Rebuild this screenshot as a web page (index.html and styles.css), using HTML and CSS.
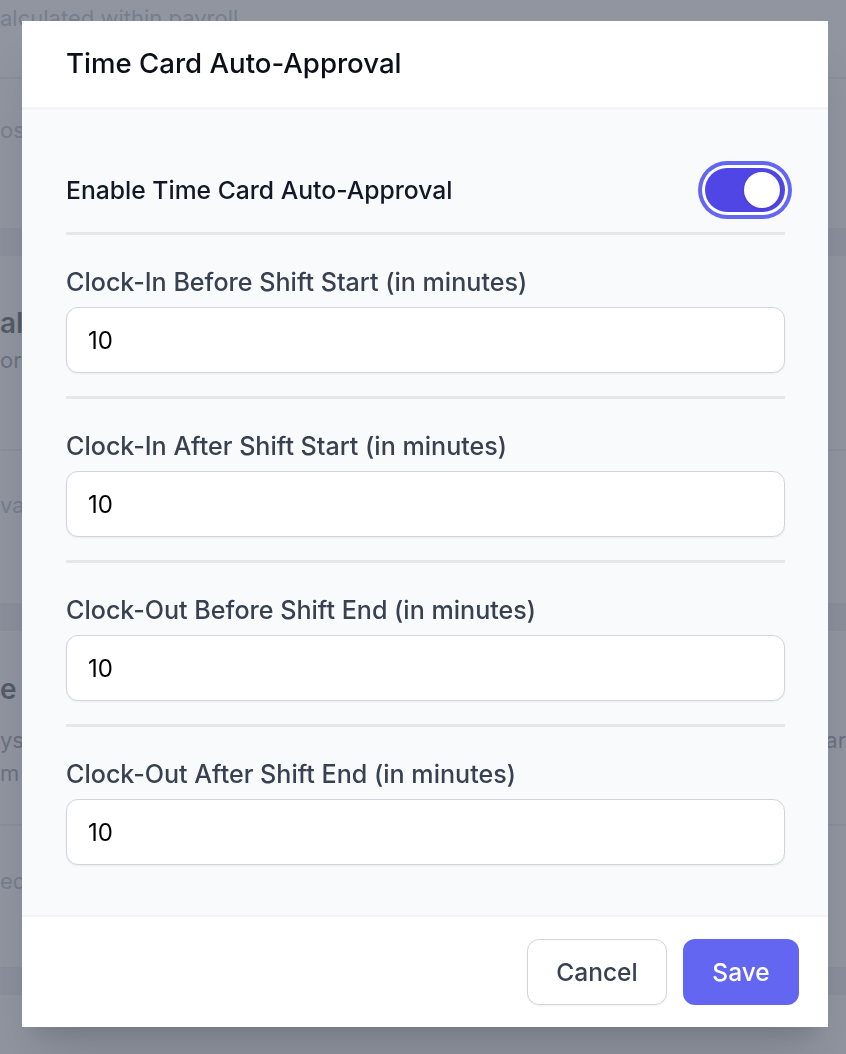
FILE: index.html
```html
<!DOCTYPE html>
<html lang="en">
<head>
<meta charset="utf-8">
<title>Time Card Auto-Approval</title>
<link rel="stylesheet" href="styles.css">
</head>
<body>
<div class="page">
  <div class="bg-row bg-row-first"><p class="bg-muted">alculated within payroll</p></div>
  <div class="bg-row bg-row-second"><p class="bg-muted">os</p></div>
  <div class="bg-band"></div>
  <section class="bg-card bg-card-one">
    <div class="bg-card-head">
      <h2 class="bg-title">al</h2>
      <p class="bg-muted">or</p>
    </div>
    <div class="bg-card-item"><p class="bg-muted">va</p></div>
  </section>
  <div class="bg-band"></div>
  <section class="bg-card bg-card-two">
    <div class="bg-card-head">
      <h2 class="bg-title">e</h2>
      <p class="bg-muted bg-wide">ys<span class="bg-end">ar</span></p>
      <p class="bg-muted">m</p>
    </div>
    <div class="bg-card-item"><p class="bg-muted">ed</p></div>
  </section>
  <div class="bg-band"></div>
  <section class="bg-card bg-card-three"></section>
</div>

<div class="overlay"></div>

<div class="modal">
  <div class="modal-header">
    <h1 class="modal-title">Time Card Auto-Approval</h1>
  </div>
  <div class="modal-body">
    <div class="toggle-row">
      <span class="toggle-label">Enable Time Card Auto-Approval</span>
      <button class="toggle" type="button" aria-pressed="true"><span class="toggle-knob"></span></button>
    </div>
    <div class="field">
      <label class="field-label">Clock-In Before Shift Start (in minutes)</label>
      <div class="field-input">10</div>
    </div>
    <div class="field">
      <label class="field-label">Clock-In After Shift Start (in minutes)</label>
      <div class="field-input">10</div>
    </div>
    <div class="field">
      <label class="field-label">Clock-Out Before Shift End (in minutes)</label>
      <div class="field-input">10</div>
    </div>
    <div class="field field-last">
      <label class="field-label">Clock-Out After Shift End (in minutes)</label>
      <div class="field-input">10</div>
    </div>
  </div>
  <div class="modal-footer">
    <button class="btn btn-cancel" type="button">Cancel</button>
    <button class="btn btn-save" type="button">Save</button>
  </div>
</div>
</body>
</html>
```

FILE: styles.css
```css
* { box-sizing: border-box; }

html, body {
  margin: 0;
  padding: 0;
  height: 100%;
  overflow: hidden;
}

body {
  font-family: Inter, "Noto Sans", sans-serif;
  background: #ffffff;
  color: #111827;
}

p, h1, h2 { margin: 0; }

/* ---------- background page ---------- */
.page {
  width: 846px;
}

.bg-muted {
  font-size: 22px;
  line-height: 28px;
  color: #9ca3af;
  white-space: nowrap;
}

.bg-row {
  border-bottom: 2px solid #e5e7eb;
}

.bg-row-first {
  height: 79px;
  padding-top: 4px;
}

.bg-row-second {
  height: 149px;
  padding-top: 37px;
  border-bottom: none;
}

.bg-band {
  height: 28px;
  background: #e5e7eb;
}

.bg-card {
  background: #ffffff;
}

.bg-card-head {
  display: flex;
  flex-direction: column;
}

.bg-title {
  font-size: 28px;
  line-height: 36px;
  font-weight: 600;
  color: #111827;
}

.bg-card-one { height: 347px; }
.bg-card-one .bg-card-head {
  height: 195px;
  padding-top: 49px;
  gap: 5px;
  border-bottom: 2px solid #e5e7eb;
}
.bg-card-one .bg-card-item { padding-top: 40px; }

.bg-card-two { height: 336px; }
.bg-card-two .bg-card-head {
  height: 195px;
  padding-top: 40px;
  border-bottom: 2px solid #e5e7eb;
}
.bg-card-two .bg-card-head .bg-title { margin-bottom: 17px; }
.bg-card-two .bg-card-head .bg-muted { line-height: 33px; }
.bg-card-two .bg-card-item { padding-top: 41px; }

.bg-wide {
  display: flex;
  justify-content: space-between;
}
.bg-card-two .bg-card-head .bg-muted { color: #6b7280; }
.bg-card-one .bg-card-head .bg-muted { color: #6b7280; }

.bg-card-three { height: 80px; }

/* ---------- overlay ---------- */
.overlay {
  position: fixed;
  inset: 0;
  background: rgba(107, 114, 128, 0.75);
}

/* ---------- modal ---------- */
.modal {
  position: absolute;
  top: 21px;
  left: 22px;
  width: 806px;
  background: #ffffff;
  box-shadow: 0 40px 50px -10px rgba(0, 0, 0, 0.12), 0 16px 20px -12px rgba(0, 0, 0, 0.12);
  display: flex;
  flex-direction: column;
}

.modal-header {
  height: 89px;
  padding: 0 44px;
  display: flex;
  align-items: center;
  padding-bottom: 3px;
  border-bottom: 3px solid #f3f4f6;
}

.modal-title {
  font-size: 27.6px;
  line-height: 32px;
  font-weight: 500;
  color: #0b0f19;
}

.modal-body {
  background: #f9fafb;
  padding: 0 43px 27px 44px;
}

.toggle-row {
  display: flex;
  align-items: center;
  justify-content: space-between;
  padding: 58px 0 20px;
  border-bottom: 3px solid #e5e7eb;
}

.toggle-label {
  font-size: 24.7px;
  line-height: 28px;
  font-weight: 500;
  color: #111827;
}

.toggle {
  position: relative;
  width: 80px;
  height: 44px;
  border: none;
  padding: 0;
  margin-right: 0;
  border-radius: 22px;
  background: #4f46e5;
  box-shadow: 0 0 0 3px #ffffff, 0 0 0 7px #6366f1;
}

.toggle-knob {
  position: absolute;
  top: 4px;
  right: 5px;
  width: 36px;
  height: 36px;
  border-radius: 50%;
  background: #ffffff;
  box-shadow: 0 1px 3px rgba(0, 0, 0, 0.15);
}

.field {
  padding: 33px 0 23px;
  border-bottom: 3px solid #e5e7eb;
  display: flex;
  flex-direction: column;
}

.field-last {
  border-bottom: none;
}

.field-label {
  font-size: 25.1px;
  line-height: 28px;
  font-weight: 500;
  color: #374151;
  margin-bottom: 11px;
}

.field-input {
  height: 66px;
  background: #ffffff;
  border: 1px solid #d1d5db;
  border-radius: 12px;
  box-shadow: 0 1px 2px rgba(0, 0, 0, 0.06);
  padding: 0 21px;
  display: flex;
  align-items: center;
  font-size: 24px;
  color: #000000;
}

.modal-footer {
  border-top: 2px solid #f3f4f6;
  padding: 22px 29px 22px;
  display: flex;
  justify-content: flex-end;
  gap: 16px;
}

.btn {
  height: 66px;
  border-radius: 12px;
  font-family: Inter, "Noto Sans", sans-serif;
  font-size: 24.5px;
  font-weight: 500;
  padding: 0;
  cursor: pointer;
}

.btn-cancel {
  width: 140px;
  background: #ffffff;
  border: 1px solid #d1d5db;
  color: #374151;
  box-shadow: 0 1px 2px rgba(0, 0, 0, 0.05);
}

.btn-save {
  width: 116px;
  background: #6366f1;
  border: none;
  color: #ffffff;
}
```
